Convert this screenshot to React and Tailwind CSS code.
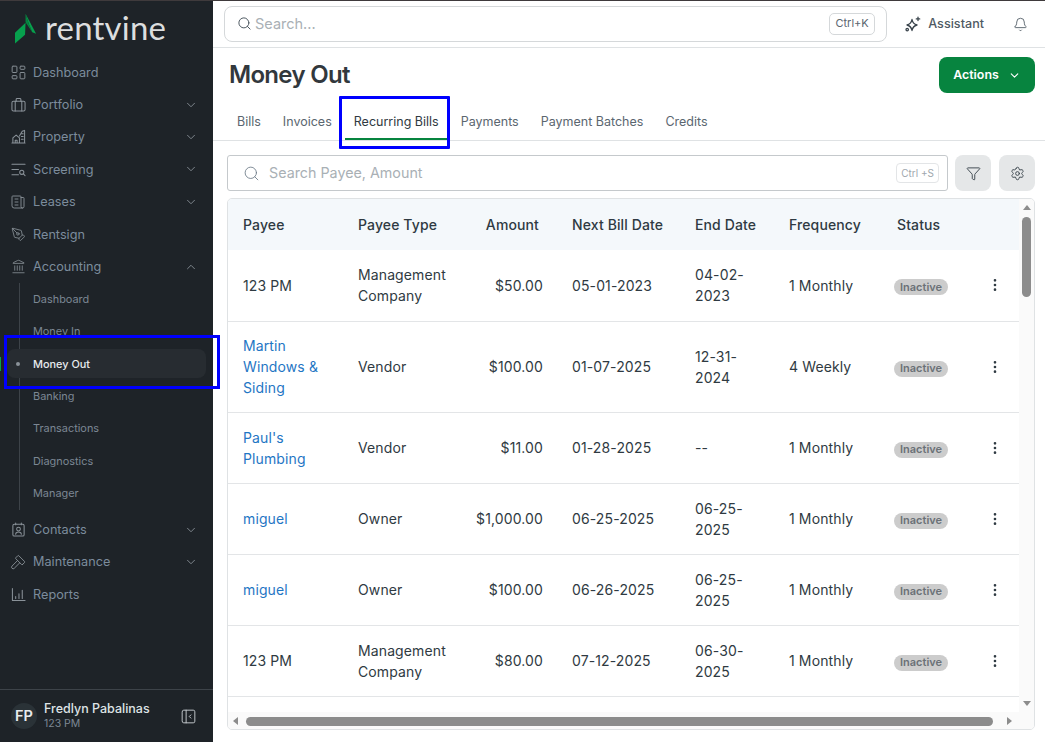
import React from "react";
import { ChevronDown, ChevronUp, Search, Bell, Funnel, Settings, EllipsisVertical, PenTool, Landmark } from "lucide-react";
import { TbLayoutDashboard, TbNews, TbHammer, TbLayoutSidebarLeftCollapse } from "react-icons/tb";

const FONT = { fontFamily: "Inter, 'Noto Sans', sans-serif" };

function Glyph({ size = 15, children, strokeWidth = 1.1 }) {
  return (
    <svg width={size} height={size} viewBox="0 0 16 16" fill="none" stroke="currentColor" strokeWidth={strokeWidth} strokeLinejoin="round" strokeLinecap="round">
      {children}
    </svg>
  );
}

const PortfolioIcon = () => (
  <Glyph size={15}>
    <rect x="1" y="4.5" width="14" height="10.5" rx="1.6" />
    <path d="M4.5 4.5V15M11.5 4.5V15M5.5 4.5V2.5a1 1 0 0 1 1-1h3a1 1 0 0 1 1 1v2" />
  </Glyph>
);
const PropertyIcon = () => (
  <Glyph size={15}>
    <path d="M1 15h14M2 15V9.5l3.5-3 3.5 3V15M6.5 15v-3h-2v3M9 7.5l3-5 2.5-1V15" />
    <path d="M11 5h2M11 8h2M11 11h2" />
  </Glyph>
);
const ScreeningIcon = () => (
  <Glyph size={15}>
    <path d="M1 2.5h14M1 8h7M1 13.5h7" />
    <circle cx="11.5" cy="11" r="2.2" />
    <path d="M13.2 12.7L15 14.5" />
  </Glyph>
);
const ContactIcon = () => (
  <Glyph size={15}>
    <rect x="2" y="2.5" width="12" height="12.5" rx="1.5" />
    <path d="M5 1v2M11 1v2" />
    <circle cx="8" cy="7.5" r="2" />
    <path d="M5 13c0-1.5 1.2-2.3 3-2.3s3 .8 3 2.3" />
  </Glyph>
);
const ReportsIcon = () => (
  <Glyph size={15}>
    <path d="M1.5 1.5V14.5H15M5 12.2v-2M8.5 12.2v-5M12 12.2V3.5" />
  </Glyph>
);
const AssistantIcon = () => (
  <Glyph size={16} strokeWidth={1.3}>
    <path d="M7 3.5c.6 3.2 2 4.8 5 5.5-3 .7-4.4 2.3-5 5.5-.6-3.2-2-4.8-5-5.5 3-.7 4.4-2.3 5-5.5z" />
    <path d="M13 1.2v3.4M11.3 2.9h3.4" />
    <circle cx="2.2" cy="13.6" r="1.2" />
  </Glyph>
);

function NavItem({ icon, label, chevron }) {
  return (
    <div className="h-[32.4px] flex items-center pl-[11px] pr-[15px] text-[12.7px] text-[#7c8c9c]">
      <span className="w-[22px] flex items-center text-[#8a9299]">{icon}</span>
      <span className="flex-1">{label}</span>
      {chevron === "down" && <ChevronDown size={14} className="text-[#8a9299]" strokeWidth={1.5} />}
      {chevron === "up" && <ChevronUp size={14} className="text-[#8a9299]" strokeWidth={1.5} />}
    </div>
  );
}

function SubItem({ label, active }) {
  if (active) {
    return (
      <div className="relative h-[32.4px] flex items-center">
        <div className="-ml-[13px] mr-[7px] flex-1 h-[29px] rounded-lg bg-[#272c31] flex items-center text-[10.9px] text-[#e8ebee]">
          <span className="w-[4px] h-[4px] rounded-full bg-[#8a9299] ml-[9px] mr-[13px]" />
          <span className="font-medium">{label}</span>
        </div>
      </div>
    );
  }
  return <div className="h-[32.4px] flex items-center pl-[13px] text-[10.9px] text-[#7c8794]">{label}</div>;
}

function Sidebar() {
  return (
    <aside className="w-[213px] shrink-0 bg-[#1e2328] flex flex-col relative">
      <div className="h-[55px] flex items-center pl-[15px] gap-[7px]">
        <svg width="23" height="32" viewBox="0 0 24 32">
          <path d="M11 0l11 21-4-1.5-3.5-8.5z" fill="#07a04d" />
          <path d="M11 0l3.5 11L18 19.5 11 9z" fill="#05853f" />
          <path d="M11 9.5L0 20v11l10.5-9z" fill="#07a04d" />
        </svg>
        <span className="text-[33px] leading-none text-[#dcdedf] font-normal tracking-[0.2px] -mt-[2px]" style={{ fontFamily: "Lato, sans-serif" }}>rentvine</span>
      </div>
      <nav className="flex flex-col">
        <NavItem label="Dashboard" icon={<TbLayoutDashboard size={19} strokeWidth={1.2} className="-ml-[2px]" />} />
        <NavItem label="Portfolio" chevron="down" icon={<PortfolioIcon />} />
        <NavItem label="Property" chevron="down" icon={<PropertyIcon />} />
        <NavItem label="Screening" chevron="down" icon={<ScreeningIcon />} />
        <NavItem label="Leases" chevron="down" icon={<TbNews size={18} strokeWidth={1.2} className="-ml-[2px]" />} />
        <NavItem label="Rentsign" icon={<PenTool size={15} strokeWidth={1.3} />} />
        <NavItem label="Accounting" chevron="up" icon={<Landmark size={15} strokeWidth={1.3} />} />
        <div className="ml-[19px] border-l border-[#3d4349] h-[227px] flex flex-col">
          <SubItem label="Dashboard" />
          <SubItem label="Money In" />
          <SubItem label="Money Out" active />
          <SubItem label="Banking" />
          <SubItem label="Transactions" />
          <SubItem label="Diagnostics" />
          <SubItem label="Manager" />
        </div>
        <div className="h-[3.6px]" />
        <NavItem label="Contacts" chevron="down" icon={<ContactIcon />} />
        <NavItem label="Maintenance" chevron="down" icon={<TbHammer size={18} strokeWidth={1.2} className="-ml-[2px]" />} />
        <NavItem label="Reports" icon={<ReportsIcon />} />
      </nav>
      <div className="mt-auto h-[53px] border-t border-[#3d4349] flex items-center pl-[11px] pr-[15px]">
        <div className="w-[26px] h-[26px] rounded-full bg-[#2a3237] flex items-center justify-center text-[14.5px] font-semibold text-[#e8ebee]">FP</div>
        <div className="ml-[7px] flex-1 flex flex-col">
          <span className="text-[12.5px] leading-[16px] font-medium text-[#dfe3e6]">Fredlyn Pabalinas</span>
          <span className="text-[10.5px] leading-[14px] text-[#7c8794]">123 PM</span>
        </div>
        <TbLayoutSidebarLeftCollapse size={19} strokeWidth={1.2} className="text-[#c5cacf]" />
      </div>
      <div className="absolute left-0 top-[356px] w-[1px] h-[14px] bg-[#07a04d]" />
    </aside>
  );
}

function Tab({ label, active }) {
  return (
    <div className={`h-full flex items-center px-[9px] pt-[3px] border-b-2 text-[12.5px] mx-[2px] ${active ? "border-[#07843f] text-[#2f3a42]" : "border-transparent text-[#5b6670]"}`}>
      {label}
    </div>
  );
}

const ROWS = [
  ["123 PM", false, "Management Company", "$50.00", "05-01-2023", "04-02-2023", "1 Monthly", 71],
  ["Martin Windows & Siding", true, "Vendor", "$100.00", "01-07-2025", "12-31-2024", "4 Weekly", 91],
  ["Paul's Plumbing", true, "Vendor", "$11.00", "01-28-2025", "--", "1 Monthly", 71],
  ["miguel", true, "Owner", "$1,000.00", "06-25-2025", "06-25-2025", "1 Monthly", 71],
  ["miguel", true, "Owner", "$100.00", "06-26-2025", "06-25-2025", "1 Monthly", 71],
  ["123 PM", false, "Management Company", "$80.00", "07-12-2025", "06-30-2025", "1 Monthly", 71],
];

function Table() {
  return (
    <div className="ml-[14px] mr-[10px] mt-[7px] mb-[12px] flex-1 min-h-0 border border-[#dfe2e4] rounded-[5px] overflow-hidden flex">
      <div className="flex-1 min-w-0 flex flex-col">
        <div className="flex-1 min-h-0 overflow-hidden">
          <table className="table-fixed w-[807px] border-collapse text-[14px] tracking-[0.12px] text-[#2f3a42]">
            <colgroup>
              <col className="w-[114px]" />
              <col className="w-[116px]" />
              <col className="w-[98px]" />
              <col className="w-[123px]" />
              <col className="w-[94px]" />
              <col className="w-[108px]" />
              <col className="w-[89px]" />
              <col className="w-[65px]" />
            </colgroup>
            <thead>
              <tr className="h-[51px] bg-[#f4f8fb] text-left">
                <th className="pl-[15px] font-medium">Payee</th>
                <th className="pl-[16px] font-medium">Payee Type</th>
                <th className="pr-[17px] text-right font-medium">Amount</th>
                <th className="pl-[16px] font-medium">Next Bill Date</th>
                <th className="pl-[16px] font-medium">End Date</th>
                <th className="pl-[16px] font-medium">Frequency</th>
                <th className="pl-[16px] font-medium">Status</th>
                <th />
              </tr>
            </thead>
            <tbody>
              {ROWS.map((r, i) => (
                <tr key={i} className="border-b border-[#e3e5e7] leading-[21px]" style={{ height: r[7] }}>
                  <td className={`pl-[15px] pr-[14px] ${r[1] ? "text-[#1f76c4]" : ""}`}>{r[0]}</td>
                  <td className="pl-[16px] pr-[8px]">{r[2]}</td>
                  <td className="pr-[13px] text-right">{r[3]}</td>
                  <td className="pl-[16px]">{r[4]}</td>
                  <td className="pl-[16px] pr-[14px]">{r[5]}</td>
                  <td className="pl-[16px]">{r[6]}</td>
                  <td className="pl-[13px]">
                    <span className="inline-flex items-center h-[16px] px-[6px] rounded-full bg-[#cccccc] text-[#6b7177] text-[11px] tracking-normal font-semibold">Inactive</span>
                  </td>
                  <td className="pl-[17px]"><EllipsisVertical size={16} strokeWidth={2} className="text-[#2f3a42]" /></td>
                </tr>
              ))}
            </tbody>
          </table>
        </div>
        <div className="h-[17px] shrink-0 bg-[#fafafa] flex items-center pl-[5px] pr-[7px] pt-[1px]">
          <div className="w-0 h-0 border-y-[4px] border-y-transparent border-r-[5px] border-r-[#8c8c8c]" />
          <div className="ml-[8px] mr-[14px] flex-1 h-[9px] rounded-full bg-[#8c8c8c]" />
          <div className="w-0 h-0 border-y-[4px] border-y-transparent border-l-[5px] border-l-[#8c8c8c]" />
        </div>
      </div>
      <div className="w-[15px] shrink-0 bg-[#fafafa] flex flex-col items-center pt-[6px] pb-[23px]">
        <div className="w-0 h-0 border-x-[4px] border-x-transparent border-b-[5px] border-b-[#8c8c8c]" />
        <div className="mt-[7px] w-[9px] h-[80px] rounded-full bg-[#8c8c8c]" />
        <div className="mt-auto w-0 h-0 border-x-[4px] border-x-transparent border-t-[5px] border-t-[#8c8c8c]" />
      </div>
    </div>
  );
}

export default function App() {
  return (
    <div className="relative h-[742px] w-full flex flex-col overflow-hidden bg-white" style={FONT}>
      <div className="h-px bg-[#3f3a3c] shrink-0" />
      <div className="flex flex-1 min-h-0">
        <Sidebar />
        <main className="flex-1 min-w-0 flex flex-col">
          <header className="h-[47px] shrink-0 border-b border-[#dfe2e4] flex items-center pl-[11px] pr-[17px]">
            <div className="flex-1 h-[36px] border border-[#d5d8da] rounded-lg flex items-center pl-[12px] pr-[11px] mb-[1px]">
              <Search size={15} strokeWidth={1.6} className="text-[#4f5a63]" />
              <span className="ml-[3px] flex-1 text-[14.5px] text-[#a9b0b5]">Search...</span>
              <span className="h-[22px] px-[5.5px] flex items-center rounded-[5px] border border-[#d5d8da] text-[11px] text-[#5b6670]">Ctrl+K</span>
            </div>
            <div className="ml-[18px] flex items-center gap-[7px] text-[12.6px] font-medium text-[#4f5a63]">
              <span className="text-[#3b454d] flex"><AssistantIcon /></span>
              <span>Assistant</span>
            </div>
            <Bell size={15} strokeWidth={1.4} className="ml-[29px] text-[#4f5a63]" />
          </header>

          <div className="shrink-0 flex items-start justify-between pl-[16px] pr-[10px] pt-[9px] h-[46px]">
            <h1 className="text-[24px] leading-[36px] font-semibold tracking-[-0.7px] text-[#32383d]">Money Out</h1>
            <button className="w-[96px] h-[36px] rounded-lg bg-[#07843f] text-white text-[12.4px] font-semibold flex items-center justify-center gap-[9px]">
              Actions
              <ChevronDown size={13} strokeWidth={2} />
            </button>
          </div>

          <div className="shrink-0 h-[47px] border-b border-[#dfe2e4] flex items-end pl-[13px]">
            <div className="flex h-[36px]">
              <Tab label="Bills" />
              <Tab label="Invoices" />
              <Tab label="Recurring Bills" active />
              <Tab label="Payments" />
              <Tab label="Payment Batches" />
              <Tab label="Credits" />
            </div>
          </div>

          <div className="shrink-0 flex items-center gap-[8px] pl-[14px] pr-[10px] mt-[14px]">
            <div className="flex-1 h-[36px] border border-[#c5c9cc] rounded-[3px] flex items-center pl-[15px] pr-[8px] mr-[-1px]">
              <Search size={17} strokeWidth={1.2} className="text-[#6c7a87]" />
              <span className="ml-[9px] flex-1 text-[14.3px] text-[#a9b0b5]">Search Payee, Amount</span>
              <span className="h-[20px] px-[4px] flex items-center rounded-[4px] border border-[#e3e5e7] text-[10px] text-[#a0a7ad]">Ctrl +S</span>
            </div>
            <button className="w-[36px] h-[36px] rounded-lg bg-[#e5e7e8] flex items-center justify-center text-[#3b454d]"><Funnel size={15} strokeWidth={1.5} /></button>
            <button className="w-[36px] h-[36px] rounded-lg bg-[#e5e7e8] flex items-center justify-center text-[#3b454d]"><Settings size={15} strokeWidth={1.5} /></button>
          </div>

          <Table />
        </main>
      </div>

      <div className="absolute left-[4px] top-[335px] w-[216px] h-[54px] border-[3px] border-[#0000ff] pointer-events-none" />
      <div className="absolute left-[339px] top-[96px] w-[111px] h-[53px] border-[3px] border-[#0000ff] pointer-events-none rounded-[1px]" />
    </div>
  );
}
